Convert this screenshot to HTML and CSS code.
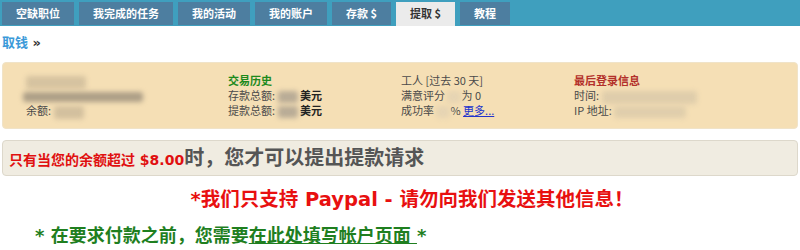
FILE: index.html
```html
<!DOCTYPE html>
<html lang="zh">
<head>
<meta charset="utf-8">
<title>取钱</title>
<link rel="stylesheet" href="styles.css">
</head>
<body>
<nav class="tabs">
  <a class="tab">空缺职位</a>
  <a class="tab">我完成的任务</a>
  <a class="tab">我的活动</a>
  <a class="tab">我的账户</a>
  <a class="tab">存款 $</a>
  <a class="tab active">提取 $</a>
  <a class="tab">教程</a>
</nav>
<div class="crumb"><a class="crumb-link">取钱</a> <span class="raquo">»</span></div>
<div class="info">
  <div class="col">
    <div class="line"><span class="blur b-name"></span></div>
    <div class="line"><span class="blur b-bar"></span></div>
    <div class="line">余额: <span class="blur b-bal"></span></div>
  </div>
  <div class="col">
    <div class="line head green">交易历史</div>
    <div class="line">存款总额: <span class="blur b-amt"></span> <b>美元</b></div>
    <div class="line">提款总额: <span class="blur b-amt"></span> <b>美元</b></div>
  </div>
  <div class="col">
    <div class="line">工人 [过去 30 天]</div>
    <div class="line">满意评分 <span class="blur b-small"></span>为 0</div>
    <div class="line">成功率 <span class="blur b-small"></span>% <a class="more">更多...</a></div>
  </div>
  <div class="col">
    <div class="line head red">最后登录信息</div>
    <div class="line">时间: <span class="blur b-time"></span></div>
    <div class="line">IP 地址: <span class="blur b-ip"></span></div>
  </div>
</div>
<div class="notice"><span class="notice-red">只有当您的余额超过 $8.00</span>时，您才可以提出提款请求</div>
<p class="paypal">*我们只支持 Paypal - 请勿向我们发送其他信息！</p>
<p class="fill">* 在要求付款之前，您需要<a class="fill-link">在此处填写帐户页面 </a>*</p>
</body>
</html>
```
FILE: styles.css
```css
html, body {
  margin: 0;
  padding: 0;
  background: #ffffff;
  font-family: "DejaVu Sans", "Noto Sans CJK SC", sans-serif;
  color: #333;
}

.tabs {
  display: flex;
  gap: 5px;
  background: #3f9fbe;
  padding: 2px 2px 1px 2px;
  height: 23px;
}

.tab {
  display: block;
  height: 23px;
  line-height: 23px;
  padding: 0 14px;
  background: #4d7ea0;
  color: #ffffff;
  font-weight: bold;
  font-size: 11px;
  font-family: "Noto Sans CJK SC", sans-serif;
  white-space: nowrap;
}

.tab.active {
  background: #ebebeb;
  color: #333;
  height: 24px;
  margin-bottom: -1px;
}

.crumb {
  margin: 0 2px;
  height: 32px;
  line-height: 32px;
  font-size: 13px;
  font-weight: bold;
}

.crumb-link {
  color: #3b9ad9;
  font-family: "Noto Sans CJK SC", sans-serif;
}

.raquo {
  color: #333;
}

.info {
  margin: 4px 2px 0 2px;
  background: #f5dfb5;
  border: 1px solid #f0e3c8;
  border-radius: 4px;
  display: grid;
  grid-template-columns: 202px 173px 173px 1fr;
  padding: 10px 0 10px 23px;
  font-size: 11px;
  font-family: "Noto Sans CJK SC", sans-serif;
  color: #4a4a4a;
}

.line {
  height: 15px;
  line-height: 15px;
  white-space: nowrap;
}

.head {
  font-weight: bold;
}

.green { color: #1d8a1d; }
.red { color: #b3302a; }

.line b {
  color: #222;
}

.more {
  color: #2233cc;
  text-decoration: underline;
}

.blur {
  display: inline-block;
  vertical-align: middle;
  filter: blur(2.5px);
  border-radius: 3px;
}

.b-name { width: 60px; height: 13px; background: #d6c3a0; }
.b-bar { width: 120px; height: 10px; background: #ad9f87; margin-left: -3px; }
.b-bal { width: 30px; height: 13px; background: #d3c09e; }
.b-amt { width: 20px; height: 12px; background: #b9ac96; }
.b-small { width: 14px; height: 12px; background: #e6d4b3; }
.b-time { width: 95px; height: 13px; background: #dfcdab; }
.b-ip { width: 72px; height: 12px; background: #e0ceac; }

.notice {
  margin: 11px 2px 0 2px;
  height: 34px;
  line-height: 34px;
  background: #f0ece1;
  border: 1px solid #ddd8cb;
  border-radius: 4px;
  padding-left: 6px;
  font-size: 20px;
  font-weight: bold;
  color: #555;
  font-family: "DejaVu Sans", "Noto Sans CJK SC", sans-serif;
  white-space: nowrap;
}

.notice-red {
  font-size: 14px;
  color: #e01010;
}

.paypal {
  margin: 12px 0 0 0;
  padding-left: 24px;
  text-align: center;
  font-size: 19.5px;
  font-weight: bold;
  color: #e81010;
  line-height: 24px;
}

.fill {
  margin: 12px 0 0 0;
  padding-left: 35px;
  font-size: 18px;
  font-weight: bold;
  color: #1f7f1f;
  line-height: 24px;
  white-space: nowrap;
}

.fill-link {
  color: #1f7f1f;
  text-decoration: underline;
}
```
